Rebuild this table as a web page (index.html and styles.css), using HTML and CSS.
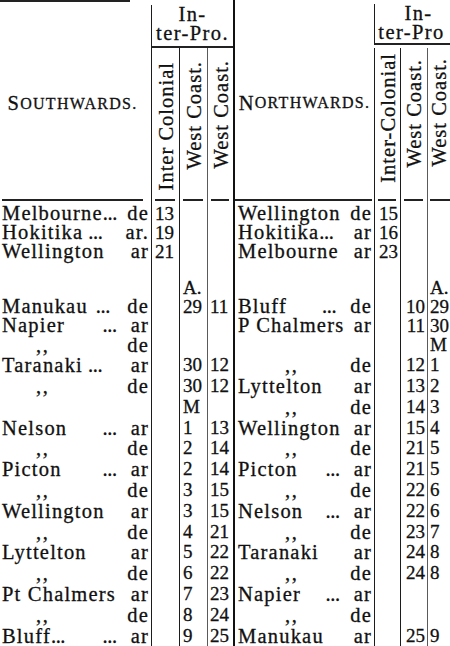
FILE: index.html
```html
<!DOCTYPE html>
<html lang="en">
<head>
<meta charset="utf-8">
<title>Inter-Provincial Steamers</title>
<link rel="stylesheet" href="styles.css">
</head>
<body>
<div class="sheet">
  <div class="head">
    <div class="title-l">
      <div class="toprule"></div>
      <div class="title">S<span class="sc">OUTHWARDS.</span></div>
    </div>
    <div class="group group-l"><div>In-</div><div>ter-Pro.</div></div>
    <div class="rot c2 k2"><span>Inter Colonial</span></div>
    <div class="rot c3 k3"><span>West Coast.</span></div>
    <div class="rot c4 k4"><span>West Coast.</span></div>
    <div class="title title-r c5">N<span class="sc">ORTHWARDS.</span></div>
    <div class="group group-r"><div class="in-r">In-</div><div>ter-Pro</div></div>
    <div class="rot c6 k6"><span>Inter-Colonial</span></div>
    <div class="rot c7 k7"><span>West Coast.</span></div>
    <div class="rot c8 k8"><span>West Coast.</span></div>
  </div>

  <div class="row rule">
    <div class="c1"><div class="dash"></div></div>
    <div class="c2"><div class="dash"></div></div>
    <div class="c3"><div class="dash"></div></div>
    <div class="c4"><div class="dash"></div></div>
    <div class="c5"><div class="dash"></div></div>
    <div class="c6"><div class="dash"></div></div>
    <div class="c7"><div class="dash"></div></div>
    <div class="c8"><div class="dash"></div></div>
  </div>

  <div class="row h19">
    <div class="n c1"><span>Melbourne</span><span class="dots">...</span><span class="g"></span><span>de</span></div>
    <div class="d c2">13</div><div class="d c3"></div><div class="d c4"></div>
    <div class="n c5"><span>Wellington</span><span class="g"></span><span>de</span></div>
    <div class="d c6">15</div><div class="d c7"></div><div class="d c8"></div>
  </div>
  <div class="row h19">
    <div class="n c1"><span>Hokitika</span><span class="dots dl">...</span><span class="g"></span><span>ar.</span></div>
    <div class="d c2">19</div><div class="d c3"></div><div class="d c4"></div>
    <div class="n c5"><span>Hokitika</span><span class="dots">...</span><span class="g"></span><span>ar</span></div>
    <div class="d c6">16</div><div class="d c7"></div><div class="d c8"></div>
  </div>
  <div class="row h19">
    <div class="n c1"><span>Wellington</span><span class="g"></span><span>ar</span></div>
    <div class="d c2">21</div><div class="d c3"></div><div class="d c4"></div>
    <div class="n c5"><span>Melbourne</span><span class="g"></span><span>ar</span></div>
    <div class="d c6">23</div><div class="d c7"></div><div class="d c8"></div>
  </div>
  <div class="row h17">
    <div class="n c1"></div>
    <div class="d c2"></div><div class="d c3"></div><div class="d c4"></div>
    <div class="n c5"></div>
    <div class="d c6"></div><div class="d c7"></div><div class="d c8"></div>
  </div>
  <div class="row h19">
    <div class="n c1"></div>
    <div class="d c2"></div><div class="d c3">A.</div><div class="d c4"></div>
    <div class="n c5"></div>
    <div class="d c6"></div><div class="d c7"></div><div class="d c8">A.</div>
  </div>
  <div class="row h19">
    <div class="n c1"><span>Manukau</span><span class="dots dl wide">...</span><span class="g"></span><span>de</span></div>
    <div class="d c2"></div><div class="d c3">29</div><div class="d c4">11</div>
    <div class="n c5"><span>Bluff</span><span class="g"></span><span class="dots dr">...</span><span>de</span></div>
    <div class="d c6"></div><div class="d c7">10</div><div class="d c8">29</div>
  </div>
  <div class="row h19">
    <div class="n c1"><span>Napier</span><span class="g"></span><span class="dots dr">...</span><span>ar</span></div>
    <div class="d c2"></div><div class="d c3"></div><div class="d c4"></div>
    <div class="n c5"><span>P Chalmers</span><span class="g"></span><span>ar</span></div>
    <div class="d c6"></div><div class="d c7">11</div><div class="d c8">30</div>
  </div>
  <div class="row h21">
    <div class="n c1"><span class="dit">,,</span><span class="g"></span><span>de</span></div>
    <div class="d c2"></div><div class="d c3"></div><div class="d c4"></div>
    <div class="n c5"></div>
    <div class="d c6"></div><div class="d c7"></div><div class="d c8">M</div>
  </div>
  <div class="row h21">
    <div class="n c1"><span>Taranaki</span><span class="dots dl">...</span><span class="g"></span><span>ar</span></div>
    <div class="d c2"></div><div class="d c3">30</div><div class="d c4">12</div>
    <div class="n c5"><span class="dit">,,</span><span class="g"></span><span>de</span></div>
    <div class="d c6"></div><div class="d c7">12</div><div class="d c8">1</div>
  </div>
  <div class="row h21">
    <div class="n c1"><span class="dit">,,</span><span class="g"></span><span>de</span></div>
    <div class="d c2"></div><div class="d c3">30</div><div class="d c4">12</div>
    <div class="n c5"><span>Lyttelton</span><span class="g"></span><span>ar</span></div>
    <div class="d c6"></div><div class="d c7">13</div><div class="d c8">2</div>
  </div>
  <div class="row h21">
    <div class="n c1"></div>
    <div class="d c2"></div><div class="d c3">M</div><div class="d c4"></div>
    <div class="n c5"><span class="dit">,,</span><span class="g"></span><span>de</span></div>
    <div class="d c6"></div><div class="d c7">14</div><div class="d c8">3</div>
  </div>
  <div class="row h21">
    <div class="n c1"><span>Nelson</span><span class="g"></span><span class="dots dr">...</span><span>ar</span></div>
    <div class="d c2"></div><div class="d c3">1</div><div class="d c4">13</div>
    <div class="n c5"><span>Wellington</span><span class="g"></span><span>ar</span></div>
    <div class="d c6"></div><div class="d c7">15</div><div class="d c8">4</div>
  </div>
  <div class="row h21">
    <div class="n c1"><span class="dit">,,</span><span class="g"></span><span>de</span></div>
    <div class="d c2"></div><div class="d c3">2</div><div class="d c4">14</div>
    <div class="n c5"><span class="dit">,,</span><span class="g"></span><span>de</span></div>
    <div class="d c6"></div><div class="d c7">21</div><div class="d c8">5</div>
  </div>
  <div class="row h21">
    <div class="n c1"><span>Picton</span><span class="g"></span><span class="dots dr">...</span><span>ar</span></div>
    <div class="d c2"></div><div class="d c3">2</div><div class="d c4">14</div>
    <div class="n c5"><span>Picton</span><span class="g"></span><span class="dots dr">...</span><span>ar</span></div>
    <div class="d c6"></div><div class="d c7">21</div><div class="d c8">5</div>
  </div>
  <div class="row h21">
    <div class="n c1"><span class="dit">,,</span><span class="g"></span><span>de</span></div>
    <div class="d c2"></div><div class="d c3">3</div><div class="d c4">15</div>
    <div class="n c5"><span class="dit">,,</span><span class="g"></span><span>de</span></div>
    <div class="d c6"></div><div class="d c7">22</div><div class="d c8">6</div>
  </div>
  <div class="row h21">
    <div class="n c1"><span>Wellington</span><span class="g"></span><span>ar</span></div>
    <div class="d c2"></div><div class="d c3">3</div><div class="d c4">15</div>
    <div class="n c5"><span>Nelson</span><span class="g"></span><span class="dots dr">...</span><span>ar</span></div>
    <div class="d c6"></div><div class="d c7">22</div><div class="d c8">6</div>
  </div>
  <div class="row h21">
    <div class="n c1"><span class="dit">,,</span><span class="g"></span><span>de</span></div>
    <div class="d c2"></div><div class="d c3">4</div><div class="d c4">21</div>
    <div class="n c5"><span class="dit">,,</span><span class="g"></span><span>de</span></div>
    <div class="d c6"></div><div class="d c7">23</div><div class="d c8">7</div>
  </div>
  <div class="row h21">
    <div class="n c1"><span>Lyttelton</span><span class="g"></span><span>ar</span></div>
    <div class="d c2"></div><div class="d c3">5</div><div class="d c4">22</div>
    <div class="n c5"><span>Taranaki</span><span class="g"></span><span>ar</span></div>
    <div class="d c6"></div><div class="d c7">24</div><div class="d c8">8</div>
  </div>
  <div class="row h21">
    <div class="n c1"><span class="dit">,,</span><span class="g"></span><span>de</span></div>
    <div class="d c2"></div><div class="d c3">6</div><div class="d c4">22</div>
    <div class="n c5"><span class="dit">,,</span><span class="g"></span><span>de</span></div>
    <div class="d c6"></div><div class="d c7">24</div><div class="d c8">8</div>
  </div>
  <div class="row h21">
    <div class="n c1"><span>Pt Chalmers</span><span class="g"></span><span>ar</span></div>
    <div class="d c2"></div><div class="d c3">7</div><div class="d c4">23</div>
    <div class="n c5"><span>Napier</span><span class="g"></span><span class="dots dr">...</span><span>ar</span></div>
    <div class="d c6"></div><div class="d c7"></div><div class="d c8"></div>
  </div>
  <div class="row h21">
    <div class="n c1"><span class="dit">,,</span><span class="g"></span><span>de</span></div>
    <div class="d c2"></div><div class="d c3">8</div><div class="d c4">24</div>
    <div class="n c5"><span class="dit">,,</span><span class="g"></span><span>de</span></div>
    <div class="d c6"></div><div class="d c7"></div><div class="d c8"></div>
  </div>
  <div class="row h21">
    <div class="n c1"><span>Bluff</span><span class="dots">...</span><span class="g"></span><span class="dots dr">...</span><span>ar</span></div>
    <div class="d c2"></div><div class="d c3">9</div><div class="d c4">25</div>
    <div class="n c5"><span>Manukau</span><span class="g"></span><span>ar</span></div>
    <div class="d c6"></div><div class="d c7">25</div><div class="d c8">9</div>
  </div>
</div>
</body>
</html>
```

FILE: styles.css
```css
* { box-sizing: border-box; }

html, body {
  margin: 0;
  padding: 0;
  background: #ffffff;
  overflow: hidden;
}

body {
  width: 450px;
  height: 646px;
  color: #111111;
  font-family: "Liberation Serif", "Times New Roman", serif;
  font-size: 20.5px;
  -webkit-text-stroke: 0.3px #111111;
}

.sheet { width: 450px; }

.head,
.row {
  display: grid;
  grid-template-columns: 151px 28px 28px 26px 141px 26px 27px 23px;
}

.head { grid-template-rows: 48px 151px; }

/* column rules */
.c2, .c3, .c6, .c7 { border-left: 1px solid #1c1c1c; }
.c4, .c8 { border-left: 1px solid #5a5a5a; }
.c5 { border-left: 2px solid #111111; }

/* header */
.title-l {
  grid-column: 1;
  grid-row: 1 / span 2;
  display: flex;
  flex-direction: column;
}

.toprule {
  width: 130px;
  height: 2px;
  background: #222222;
}

.title {
  flex: 1;
  display: flex;
  align-items: center;
  justify-content: center;
  padding: 6px 6px 0 0;
  letter-spacing: 1.3px;
  white-space: nowrap;
}

.title-r {
  grid-column: 5;
  grid-row: 1 / span 2;
  padding: 7px 0 0 0;
}

.sc { font-size: 16px; }

.group {
  grid-row: 1;
  margin-top: 5px;
  border-left: 1px solid #1c1c1c;
  border-bottom: 2px solid #222222;
  text-align: center;
  line-height: 19px;
  letter-spacing: 1.4px;
  white-space: nowrap;
}

.group-l { grid-column: 2 / span 3; }

.group-r {
  grid-column: 6 / span 3;
  align-self: start;
  margin-top: 4px;
  height: 41px;
  padding-right: 2px;
}

.in-r { padding-left: 14px; }

.rot {
  grid-row: 2;
  display: flex;
  justify-content: center;
  align-items: flex-start;
}

.k2 { grid-column: 2; padding-top: 14px; }
.k3 { grid-column: 3; padding-top: 13px; }
.k4 { grid-column: 4; padding-top: 12px; }
.k6 { grid-column: 6; padding-top: 5px; }
.k7 { grid-column: 7; padding-top: 11px; }
.k8 { grid-column: 8; padding-top: 10px; }

.rot span {
  writing-mode: vertical-rl;
  transform: rotate(180deg);
  white-space: nowrap;
  line-height: 20px;
  letter-spacing: 1px;
}

/* rule under the header */
.rule { height: 4.5px; }

.dash {
  height: 2px;
  background: #222222;
  margin: 0 4px 0 3px;
}

.rule .c1 .dash { margin: 0 8px 0 2px; }
.rule .c5 .dash { margin: 0 2px 0 0; }
.rule .c8 .dash { margin: 0 0 0 2px; }

/* body rows */
.h19 { height: 19px; line-height: 19px; }
.h17 { height: 17px; line-height: 17px; }
.h21 { height: 20.8px; line-height: 20.8px; }

.n {
  display: flex;
  padding: 0 2px;
  white-space: nowrap;
  letter-spacing: 1.2px;
}

.c5.n { padding: 0 2px 0 3px; }

.g { flex: 1; }

.dots { letter-spacing: -0.4px; margin-right: 0.4px; }
.dl { margin-left: 5px; }
.wide { margin-left: 8px; }
.dr { margin-right: 14px; }
.c5 .dr { margin-right: 14px; }

.dit { margin-left: 34px; letter-spacing: 1.5px; }
.c5 .dit { margin-left: 47px; }

.d {
  font-size: 19px;
  padding-left: 3px;
  white-space: nowrap;
}

.c4.d, .c8.d { padding-left: 2px; }
.c6.d { padding-left: 4px; }
.c7.d { text-align: right; padding: 0 2px 0 0; }
```
